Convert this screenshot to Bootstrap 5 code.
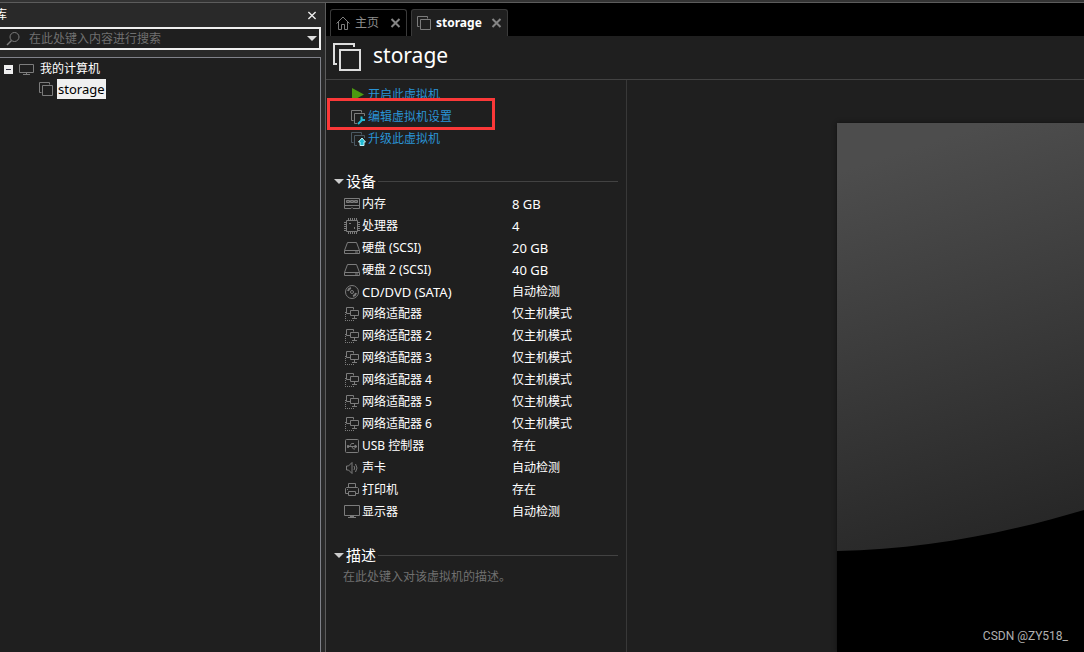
<!DOCTYPE html>
<html lang="zh-CN" data-bs-theme="dark">
<head>
<meta charset="utf-8">
<meta name="viewport" content="width=device-width, initial-scale=1">
<title>storage</title>
<link href="https://cdn.jsdelivr.net/npm/bootstrap@5.3.0/dist/css/bootstrap.min.css" rel="stylesheet">
<style>
  body { font: 12px/22px "Noto Sans", "Noto Sans CJK SC", sans-serif; background: #1f1f1f; color: #fff; }
  button { font: inherit; color: inherit; background: none; border: 0; padding: 0; }
  svg { flex: none; display: block; }
  .ico { fill: none; stroke: #7c7c7c; stroke-width: 1; }
  .app { border-top: 2px solid #333; }
  .app-body { border-top: 1px solid #5c5c5c; }
  .library { width: 325px; background: #292929; padding-right: 4px; }
  .library-head { height: 24px; padding-right: 4px; }
  .library-name { margin-left: -5px; }
  .search-box { height: 23px; background: #1f1f1f; border: 2px solid #f0f0f0; border-left: 0; padding: 0 2px 0 5px; margin-bottom: 7px; }
  .search-box input { background: none; border: 0; outline: 0; color: #fff; margin-left: 8px; padding: 0; min-width: 0; font: inherit; }
  input::placeholder, textarea::placeholder { color: #707070; opacity: 1; }
  .tree { background: #1f1f1f; border: 1px solid #80828a; border-left: 0; border-bottom: 0; padding: 1px 4px; line-height: 20px; }
  .tree-node { height: 20px; gap: 6px; }
  .tree-child { padding-left: 35px; gap: 4px; }
  .picked { background: #f0f0f0; color: #000; padding: 0 1px; }
  .latin { font-size: 13px; }
  .workspace { border-left: 1px solid #5c5c5c; min-width: 0; }
  .tabs { background: #000; height: 33px; padding: 6px 4px 0; gap: 4px; }
  .vm-tab { border: 1px solid #3a3a3a; border-bottom: 0; border-radius: 3px 3px 0 0; padding: 0 5px; color: #8c8c8c; }
  .vm-tab.current { background: #1f1f1f; color: #fff; }
  .vm-tab > button { gap: 5px; }
  .vm-tab > button + button { margin-left: 11px; }
  .vm-tab.current > button + button { margin-left: 9px; }
  .vm-title { height: 44px; border-bottom: 1px solid #424242; padding: 0 6px 2px; gap: 11px; }
  .vm-title h1 { font-size: 21px; line-height: 28px; font-weight: 400; margin: 0; padding-bottom: 4px; }
  .summary { width: 301px; border-right: 1px solid #383838; padding: 4px 8px 0; }
  .actions { padding-left: 16px; margin-bottom: 20px; }
  .actions a { color: #2a93d5; text-decoration: none; gap: 2px; height: 22px; }
  .highlight { position: absolute; top: -8px; left: -23px; width: 168px; height: 32px; border: 3px solid #fb3838; pointer-events: none; }
  .section-head { gap: 2px; height: 22px; }
  .section-head h2 { font-size: 15px; line-height: 22px; font-weight: 400; margin: 0; }
  .section-head::after { content: ""; flex: 1; border-top: 1px solid #424242; }
  .devices { margin: 1px 0 21px 10px; border-collapse: collapse; }
  .devices th, .devices td { height: 22px; padding: 0; font-weight: 400; white-space: nowrap; }
  .devices th { width: 168px; }
  .devices th > span { gap: 2px; }
  .notes { background: none; border: 0; outline: 0; resize: none; padding: 2px 9px; line-height: 18px; font-size: 12px; color: #fff; }
  .preview { padding: 43px 0 0 210px; min-width: 0; }
  .screen { background: #000; box-shadow: 0 0 4px #111; }
  .watermark { position: absolute; right: 16px; bottom: 8px; font: 12px/16px Roboto, sans-serif; color: #b0b0b0; }
</style>
</head>
<body>
<svg class="d-none" aria-hidden="true">
  <symbol id="vm" viewBox="0 0 14 14"><path d="M2.500 10.500H.5V.5h10v2M3.500 3.500h10v10h-10z"/></symbol>
  <symbol id="net" viewBox="0 0 16 16"><path d="M6.500 7.500H2.500v-6h7v2M6.500 4.500h8v5h-8zM10.500 10v2M8 12.500h5"/><path stroke-dasharray="1 1" d="M1.500 6v9M1 14.500h10"/></symbol>
  <symbol id="disk" viewBox="0 0 16 16"><path d="M3.500 2.500h9l3 8v3H.5v-3zM.5 10.500h15M11 12h3"/></symbol>
  <symbol id="cross" viewBox="0 0 10 10"><path d="M1 1l8 8M9 1L1 9"/></symbol>
  <symbol id="down" viewBox="0 0 10 5"><path d="M0 0h10L5 5z"/></symbol>
</svg>
<div class="app vh-100 d-flex flex-column">
<div class="app-body d-flex flex-grow-1 overflow-hidden">
  <aside class="library d-flex flex-column flex-shrink-0">
    <div class="library-head d-flex align-items-center justify-content-between">
      <span class="library-name">库</span>
      <button aria-label="关闭"><svg width="10" height="9" stroke="#eee" stroke-width="1.500"><use href="#cross"/></svg></button>
    </div>
    <div class="search-box d-flex align-items-center">
      <svg class="ico" width="16" height="16"><circle cx="9.500" cy="6" r="4.500"/><path d="M6.500 9.500L2 14" stroke-width="1.500"/></svg>
      <input class="flex-grow-1" type="text" aria-label="搜索" placeholder="在此处键入内容进行搜索">
      <button aria-label="搜索选项"><svg width="10" height="5" fill="#ddd"><use href="#down"/></svg></button>
    </div>
    <div class="tree flex-grow-1">
      <div class="tree-node d-flex align-items-center">
        <button aria-label="折叠"><svg width="9" height="9"><path fill="#eee" d="M0 0h9v9H0z"/><path stroke="#334" d="M2 4.500h5"/></svg></button>
        <svg class="ico" width="15" height="12"><path d="M.5 1.500h14v8H.5zM7.500 10v1M4 11.500h7"/></svg>
        <span>我的计算机</span>
      </div>
      <div class="tree-node tree-child d-flex align-items-center">
        <svg class="ico" width="14" height="14"><use href="#vm"/></svg>
        <button class="picked latin">storage</button>
      </div>
    </div>
  </aside>
  <main class="workspace d-flex flex-column flex-grow-1">
    <nav class="tabs d-flex">
      <div class="vm-tab d-flex align-items-center">
        <button class="d-flex align-items-center"><svg class="ico" width="14" height="14"><path d="M.5 7.500L7 1l6.500 6.500M2.500 6v7.500h3v-5h3v5h3V6"/></svg>主页</button>
        <button aria-label="关闭主页"><svg width="11" height="10" stroke="#858585" stroke-width="2"><use href="#cross"/></svg></button>
      </div>
      <div class="vm-tab current d-flex align-items-center">
        <button class="d-flex align-items-center fw-bold"><svg class="ico" width="14" height="14"><use href="#vm"/></svg>storage</button>
        <button aria-label="关闭 storage"><svg width="11" height="10" stroke="#858585" stroke-width="2"><use href="#cross"/></svg></button>
      </div>
    </nav>
    <header class="vm-title d-flex align-items-center flex-shrink-0">
      <svg width="30" height="30" fill="none" stroke="#ddd" stroke-width="2"><path d="M5 22H2V2h20v3M8 8h20v20H8z"/></svg>
      <h1>storage</h1>
    </header>
    <div class="d-flex flex-grow-1">
      <section class="summary flex-shrink-0">
        <div class="actions">
          <a href="#" class="d-flex align-items-center"><svg width="16" height="16"><path fill="#4c9a10" d="M2 1l12 6.500L2 14z"/></svg>开启此虚拟机</a>
          <div class="position-relative">
            <a href="#" class="d-flex align-items-center"><svg class="ico" width="16" height="16"><path d="M3.500 11.500h-2v-10h10v2M7 14.500H4.500v-10h10V7"/><path stroke="#22b8d4" stroke-width="2" d="M8 15l5-5M11.500 7.500v3.500h3.500"/></svg>编辑虚拟机设置</a>
            <span class="highlight"></span>
          </div>
          <a href="#" class="d-flex align-items-center"><svg class="ico" width="16" height="16"><path stroke="#4b5963" d="M3.500 11.500h-2v-10h10v2M7 14.500H4.500v-10h10V7"/><path stroke="#bff3fa" fill="#20b9d2" d="M12 7l3.500 4H14v3.500h-4V11H8.500z"/></svg>升级此虚拟机</a>
        </div>
        <div class="section-head d-flex align-items-center"><button aria-label="折叠设备"><svg width="10" height="5" fill="#ccc"><use href="#down"/></svg></button><h2>设备</h2></div>
        <table class="devices"><tbody>
          <tr><th scope="row"><span class="d-flex align-items-center"><svg class="ico" width="16" height="16"><path d="M.5 2.500h15v10H9l-1-1-1 1H.5zM0 9.500h16"/><path fill="#555" d="M2.500 4.500h3v2h-3zM6.500 4.500h3v2h-3zM10.500 4.500h3v2h-3z"/></svg>内存</span></th><td class="latin">8 GB</td></tr>
          <tr><th scope="row"><span class="d-flex align-items-center"><svg class="ico" width="16" height="16"><path d="M2.500 2.500h11v11h-11z"/><path stroke-dasharray="1 1" stroke-width="2" d="M4 1h9M4 15h9M1 4v9M15 4v9"/><path d="M5 5.500h2M10.500 9v2"/></svg>处理器</span></th><td class="latin">4</td></tr>
          <tr><th scope="row"><span class="d-flex align-items-center"><svg class="ico" width="16" height="16"><use href="#disk"/></svg>硬盘 (SCSI)</span></th><td class="latin">20 GB</td></tr>
          <tr><th scope="row"><span class="d-flex align-items-center"><svg class="ico" width="16" height="16"><use href="#disk"/></svg>硬盘 2 (SCSI)</span></th><td class="latin">40 GB</td></tr>
          <tr><th scope="row" class="latin"><span class="d-flex align-items-center"><svg class="ico" width="16" height="16"><circle cx="8" cy="8" r="6.500"/><circle cx="8" cy="8" r="1.500"/><path d="M4 7a4 4 0 0 1 3-3M12 9a4 4 0 0 1-3 3" stroke-width="2"/></svg>CD/DVD (SATA)</span></th><td>自动检测</td></tr>
          <tr><th scope="row"><span class="d-flex align-items-center"><svg class="ico" width="16" height="16"><use href="#net"/></svg>网络适配器</span></th><td>仅主机模式</td></tr>
          <tr><th scope="row"><span class="d-flex align-items-center"><svg class="ico" width="16" height="16"><use href="#net"/></svg>网络适配器 2</span></th><td>仅主机模式</td></tr>
          <tr><th scope="row"><span class="d-flex align-items-center"><svg class="ico" width="16" height="16"><use href="#net"/></svg>网络适配器 3</span></th><td>仅主机模式</td></tr>
          <tr><th scope="row"><span class="d-flex align-items-center"><svg class="ico" width="16" height="16"><use href="#net"/></svg>网络适配器 4</span></th><td>仅主机模式</td></tr>
          <tr><th scope="row"><span class="d-flex align-items-center"><svg class="ico" width="16" height="16"><use href="#net"/></svg>网络适配器 5</span></th><td>仅主机模式</td></tr>
          <tr><th scope="row"><span class="d-flex align-items-center"><svg class="ico" width="16" height="16"><use href="#net"/></svg>网络适配器 6</span></th><td>仅主机模式</td></tr>
          <tr><th scope="row"><span class="d-flex align-items-center"><svg class="ico" width="16" height="16"><rect x="1.500" y="1.500" width="13" height="13" rx="1"/><path d="M4 8.500h9M5.500 8.500l2-3H10M7.500 8.500l2 2.500H11"/><path fill="#858585" d="M3.500 7.500h1v2h-1zM11 7l2 1.500-2 1.500z"/></svg>USB 控制器</span></th><td>存在</td></tr>
          <tr><th scope="row"><span class="d-flex align-items-center"><svg class="ico" width="16" height="16"><path d="M2.500 6v4h2L8 13.500v-11L4.500 6zM10 6q1.500 2 0 4M11.500 4q3 4 0 8"/></svg>声卡</span></th><td>自动检测</td></tr>
          <tr><th scope="row"><span class="d-flex align-items-center"><svg class="ico" width="16" height="16"><path d="M4.500 6V1.500h7V6M4 11.500H1.500v-5l1-1h11l1 1v5H12M4.500 9.500h7v4h-7zM3 7.500h1"/></svg>打印机</span></th><td>存在</td></tr>
          <tr><th scope="row"><span class="d-flex align-items-center"><svg class="ico" width="16" height="16"><path d="M.5 1.500h15v10H.5zM6 12.500h4M4 13.500h8"/></svg>显示器</span></th><td>自动检测</td></tr>
        </tbody></table>
        <div class="section-head d-flex align-items-center"><button aria-label="折叠描述"><svg width="10" height="5" fill="#ccc"><use href="#down"/></svg></button><h2>描述</h2></div>
        <textarea class="notes w-100" rows="3" aria-label="描述" placeholder="在此处键入对该虚拟机的描述。"></textarea>
      </section>
      <section class="preview d-flex flex-grow-1">
        <div class="screen flex-grow-1 position-relative">
          <svg class="w-100 h-100" viewBox="0 0 247 529" preserveAspectRatio="xMinYMin slice" aria-hidden="true">
            <defs><linearGradient id="glare" gradientUnits="userSpaceOnUse" x1="60" y1="30" x2="190" y2="430"><stop stop-color="#4d4d4d"/><stop offset="1" stop-color="#252525"/></linearGradient></defs>
            <path fill="url(#glare)" d="M0 0h247v387C170 410 85 427 0 428z"/>
          </svg>
          <span class="watermark">CSDN @ZY518_</span>
        </div>
      </section>
    </div>
  </main>
</div>
</div>
<script src="https://cdn.jsdelivr.net/npm/bootstrap@5.3.0/dist/js/bootstrap.bundle.min.js"></script>
</body>
</html>
